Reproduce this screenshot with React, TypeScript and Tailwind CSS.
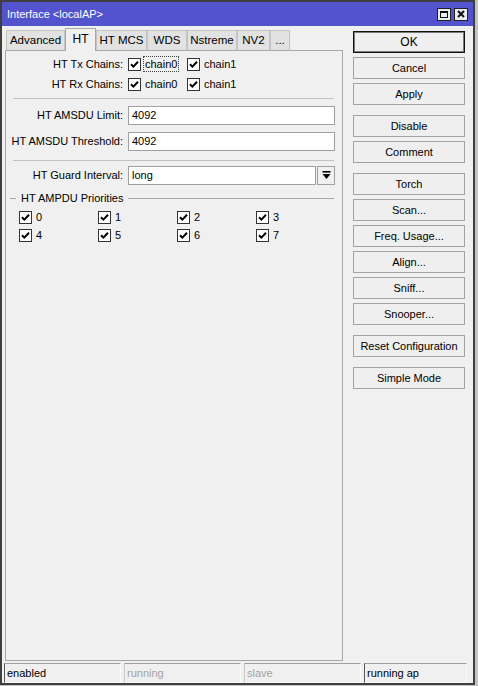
import React from 'react';

const FONT = { fontFamily: '"Liberation Sans", Arial, sans-serif' };

const TABS = [
  { label: 'Advanced', w: 'w-[59px]' },
  { label: 'HT', w: 'w-[31px]', active: true },
  { label: 'HT MCS', w: 'w-[51px]' },
  { label: 'WDS', w: 'w-[40px]' },
  { label: 'Nstreme', w: 'w-[50px]' },
  { label: 'NV2', w: 'w-[33px]' },
  { label: '...', w: 'w-[20px]' },
];

// button groups, separated by a larger gap
const BUTTON_GROUPS = [
  ['OK', 'Cancel', 'Apply'],
  ['Disable', 'Comment'],
  ['Torch', 'Scan...', 'Freq. Usage...', 'Align...', 'Sniff...', 'Snooper...'],
  ['Reset Configuration'],
  ['Simple Mode'],
];

const Check = () => (
  <span className="w-[13px] h-[13px] shrink-0 border border-[#333] bg-white flex items-center justify-center">
    <svg width="9" height="9" viewBox="0 0 9 9">
      <path d="M1 4.2 L3.4 6.6 L8 1.8" fill="none" stroke="#000" strokeWidth="2" />
    </svg>
  </span>
);

const CheckItem = ({ label, focus, className = '' }: { label: string; focus?: boolean; className?: string }) => (
  <div className={`flex items-center ${className}`}>
    <Check />
    <span className={`ml-[3px] px-[1px] leading-[14px] ${focus ? 'outline outline-1 outline-dotted outline-[#444]' : ''}`}>
      {label}
    </span>
  </div>
);

const Label = ({ children }: { children: React.ReactNode }) => (
  <span className="w-[117px] shrink-0 text-right whitespace-nowrap">{children}</span>
);

const Field = ({ value, className = 'w-[207px]' }: { value: string; className?: string }) => (
  <div className={`h-[19px] ml-[5px] border border-[#a0a0a0] bg-white flex items-center pl-[3px] ${className}`}>
    {value}
  </div>
);

export default function App() {
  return (
    <div className="w-[478px] h-[686px] bg-[#c4c4c4] text-[11px] text-black whitespace-nowrap" style={FONT}>
      <div className="w-[475px] h-[685px] border-2 border-[#3f3f3f] bg-[#f0f0f0] flex flex-col">
        {/* title bar */}
        <div className="h-[24px] shrink-0 bg-[#5353ce] flex items-center pl-[5px] pr-[5px]">
          <span className="text-white">Interface &lt;localAP&gt;</span>
          <div className="ml-auto flex gap-[3px]">
            <span className="w-[14px] h-[13px] border border-[#222] bg-[#ececec] flex items-center justify-center">
              <span className="w-[8px] h-[7px] border border-[#111] border-t-2" />
            </span>
            <span className="w-[14px] h-[13px] border border-[#222] bg-[#ececec] flex items-center justify-center">
              <svg width="8" height="8" viewBox="0 0 8 8">
                <path d="M1 1 L7 7 M7 1 L1 7" stroke="#111" strokeWidth="2" />
              </svg>
            </span>
          </div>
        </div>

        {/* body */}
        <div className="flex-1 flex min-h-0 pb-[2px]">
          <div className="ml-[3px] w-[338px] flex flex-col">
            <div className="h-[24px] shrink-0 flex items-end pl-[1px]">
              {TABS.map((t) =>
                t.active ? (
                  <div
                    key={t.label}
                    className={`${t.w} h-[23px] -mb-px relative z-10 bg-[#f0f0f0] border border-b-0 border-[#a8a8a8] flex items-center justify-center pb-[3px] text-[12px]`}
                  >
                    {t.label}
                  </div>
                ) : (
                  <div
                    key={t.label}
                    className={`${t.w} h-[20px] bg-[#e2e2e2] border border-b-0 border-[#c4c4c4] flex items-center justify-center text-[11.5px]`}
                  >
                    {t.label}
                  </div>
                ),
              )}
            </div>

            <div className="flex-1 border border-[#a8a8a8] bg-[#f0f0f0] pt-[3px] flex flex-col">
              <div className="h-[20px] flex items-center">
                <Label>HT Tx Chains:</Label>
                <CheckItem label="chain0" focus className="ml-[5px] w-[59px]" />
                <CheckItem label="chain1" />
              </div>
              <div className="h-[20px] flex items-center">
                <Label>HT Rx Chains:</Label>
                <CheckItem label="chain0" className="ml-[5px] w-[59px]" />
                <CheckItem label="chain1" />
              </div>

              <div className="mt-[4px] ml-[7px] w-[321px] border-t border-[#c2c2c2]" />

              <div className="mt-[7px] flex items-center">
                <Label>HT AMSDU Limit:</Label>
                <Field value="4092" />
              </div>
              <div className="mt-[7px] flex items-center">
                <Label>HT AMSDU Threshold:</Label>
                <Field value="4092" />
              </div>

              <div className="mt-[9px] ml-[7px] w-[321px] border-t border-[#c2c2c2]" />

              <div className="mt-[5px] flex items-center">
                <Label>HT Guard Interval:</Label>
                <Field value="long" className="w-[188px]" />
                <div className="ml-[1px] w-[18px] h-[19px] border border-[#a0a0a0] bg-[#f0f0f0] flex items-center justify-center">
                  <svg width="9" height="9" viewBox="0 0 9 9">
                    <rect x="0.5" y="0" width="8" height="1.6" fill="#000" />
                    <path d="M0.5 3 H8.5 L4.5 8 Z" fill="#000" />
                  </svg>
                </div>
              </div>

              <div className="mt-[6px] h-[14px] w-[328px] flex items-center">
                <span className="ml-[4px] w-[6px] border-t border-[#a8a8a8]" />
                <span className="ml-[5px]">HT AMPDU Priorities</span>
                <span className="ml-[5px] flex-1 border-t border-[#a8a8a8]" />
              </div>

              <div className="mt-[3px] ml-[13px] grid grid-cols-[79px_79px_79px_79px]">
                {['0', '1', '2', '3', '4', '5', '6', '7'].map((n) => (
                  <div key={n} className="h-[18px] flex items-center">
                    <Check />
                    <span className="ml-[4px]">{n}</span>
                  </div>
                ))}
              </div>
            </div>
          </div>

          {/* buttons */}
          <div className="ml-[10px] mt-[5px] w-[112px] flex flex-col gap-[10px]">
            {BUTTON_GROUPS.map((g, gi) => (
              <div key={gi} className="flex flex-col gap-[4px]">
                {g.map((b) => (
                  <button
                    key={b}
                    className={`h-[22px] w-full flex items-center justify-center bg-[#efefef] border ${
                      b === 'OK' ? 'border-[#111] shadow-[inset_0_0_0_1px_#7a7a7a] text-[12px]' : 'border-[#a3a3a3]'
                    }`}
                  >
                    {b}
                  </button>
                ))}
              </div>
            ))}
          </div>
        </div>

        {/* status bar */}
        <div className="h-[20px] shrink-0 flex gap-[3px] pl-[2px]">
          {[
            { t: 'enabled', w: 'w-[117px]', dim: false },
            { t: 'running', w: 'w-[117px]', dim: true },
            { t: 'slave', w: 'w-[117px]', dim: true },
            { t: 'running ap', w: 'w-[103px]', dim: false },
          ].map((s) => (
            <div
              key={s.t}
              className={`${s.w} h-[20px] flex items-center pl-[2px] border border-t-[#a0a0a0] border-l-[#555] border-b-[#fafafa] border-r-[#fafafa] ${
                s.dim ? 'text-[#a3a3a3] border-l-[#c8c8c8]' : ''
              }`}
            >
              {s.t}
            </div>
          ))}
        </div>
      </div>
    </div>
  );
}
